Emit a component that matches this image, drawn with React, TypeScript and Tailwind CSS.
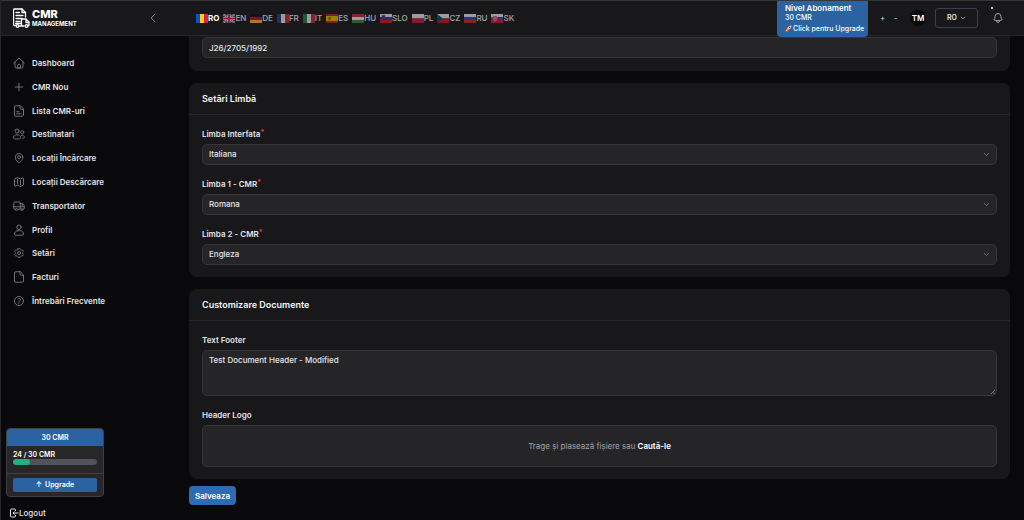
import React from "react";
import {
  HiOutlineBell,
  HiOutlineChevronDown,
  HiOutlineChevronLeft,
  HiOutlineCog6Tooth,
  HiOutlineMap,
  HiOutlineMapPin,
  HiOutlinePlus,
  HiOutlineQuestionMarkCircle,
} from "react-icons/hi2";

function iconFrom(children: React.ReactNode) {
  return function Icon({ className }: { className?: string }) {
    return (
      <svg viewBox="0 0 24 24" className={className} fill="none" stroke="currentColor" strokeLinecap="round" strokeLinejoin="round" aria-hidden="true">
        {children}
      </svg>
    );
  };
}

const HomeIcon = iconFrom(
  <>
    <path d="M1.5 12L12 2l10.5 10M4 10v9.5A2.5 2.5 0 0 0 6.5 22h11a2.5 2.5 0 0 0 2.5-2.5V10" />
    <path d="M9 17.5a3 3 0 0 1 6 0V22H9z" />
  </>
);

const FileIcon = iconFrom(
  <path d="M14 1.5H5.5A2.5 2.5 0 0 0 3 4v16a2.5 2.5 0 0 0 2.5 2.5h13A2.5 2.5 0 0 0 21 20V8.5zM14 1.5V6a2.5 2.5 0 0 0 2.5 2.5H21" />
);

const FileTextIcon = iconFrom(
  <>
    <path d="M14 1.5H5.5A2.5 2.5 0 0 0 3 4v16a2.5 2.5 0 0 0 2.5 2.5h13A2.5 2.5 0 0 0 21 20V8.5zM14 1.5V6a2.5 2.5 0 0 0 2.5 2.5H21" />
    <path d="M7.5 13.5h5M7.5 17.5h9" />
  </>
);

const UsersIcon = iconFrom(
  <>
    <circle cx="8" cy="6" r="4" />
    <path d="M1 19.5c0-3.5 3-6 7-6s7 2.5 7 6c0 2-3 2.500-7 2.500s-7-.5-7-2.500z" />
    <circle cx="18.5" cy="8.5" r="3" />
    <path d="M16.5 14.5c3.5-.5 6.500 1.5 6.500 4 0 1.500-1.500 2-4 2" />
  </>
);

const UserIcon = iconFrom(
  <>
    <circle cx="12" cy="6.5" r="4.5" />
    <path d="M8.5 13.5h7c3 1 5.5 3.5 5.5 6.5 0 1.5-1 2.5-2.5 2.5h-13C4 22.5 3 21.5 3 20c0-3 2.5-5.5 5.5-6.5z" />
  </>
);

const TruckIcon = iconFrom(
  <>
    <path d="M5 18.5H3.5a2 2 0 0 1-2-2v-10A2.5 2.5 0 0 1 4 4h8.5a2 2 0 0 1 2 2v12.5H9M14.5 7.5H18c3 0 4.5 2.5 4.5 5.5v3.5a2 2 0 0 1-2 2M1.5 13.5H22M18.5 8v5" />
    <circle cx="7" cy="19" r="2" />
    <circle cx="18" cy="19" r="2" />
  </>
);

const navItems = [
  { label: "Dashboard", icon: HomeIcon },
  { label: "CMR Nou", icon: HiOutlinePlus },
  { label: "Lista CMR-uri", icon: FileTextIcon },
  { label: "Destinatari", icon: UsersIcon },
  { label: "Locații Încărcare", icon: HiOutlineMapPin },
  { label: "Locații Descărcare", icon: HiOutlineMap },
  { label: "Transportator", icon: TruckIcon },
  { label: "Profil", icon: UserIcon },
  { label: "Setări", icon: HiOutlineCog6Tooth },
  { label: "Facturi", icon: FileIcon },
  { label: "Întrebări Frecvente", icon: HiOutlineQuestionMarkCircle },
];

const languages = ["RO", "EN", "DE", "FR", "IT", "ES", "HU", "SLO", "PL", "CZ", "RU", "SK"];

const horizontal: Record<string, string[]> = {
  DE: ["#111111", "#d0102a", "#f5c518"],
  HU: ["#cd2a3e", "#f4f4f4", "#3f8a3c"],
  SLO: ["#f4f4f4", "#1f3fc0", "#e01b24"],
  RU: ["#f4f4f4", "#1c57c4", "#d52b1e"],
  SK: ["#f4f4f4", "#1c57b4", "#e0162b"],
};

const vertical: Record<string, string[]> = {
  RO: ["#0b50c8", "#fcd116", "#dd2033"],
  FR: ["#25408f", "#f4f4f4", "#d8283c"],
  IT: ["#1f8a4a", "#f4f4f4", "#cd2a3e"],
};

function Flag({ code }: { code: string }) {
  return (
    <svg viewBox="0 0 12 9" className="h-[9px] w-3 shrink-0" aria-hidden="true">
      {horizontal[code]?.map((color, i) => (
        <rect key={color} y={i * 3} width="12" height="3" fill={color} />
      ))}
      {vertical[code]?.map((color, i) => (
        <rect key={color} x={i * 4} width="4" height="9" fill={color} />
      ))}
      {code === "EN" && (
        <>
          <rect width="12" height="9" fill="#20336f" />
          <path d="M0 0l12 9M12 0L0 9" stroke="#f4f4f4" strokeWidth="2" />
          <path d="M0 0l12 9M12 0L0 9" stroke="#c8102e" strokeWidth="0.7" />
          <path d="M6 0v9M0 4.5h12" stroke="#f4f4f4" strokeWidth="3" />
          <path d="M6 0v9M0 4.5h12" stroke="#c8102e" strokeWidth="1.6" />
        </>
      )}
      {code === "ES" && (
        <>
          <rect width="12" height="9" fill="#c8202c" />
          <rect y="2" width="12" height="5" fill="#f5c000" />
          <rect x="2.5" y="3" width="2.2" height="2.8" fill="#b04a2a" />
        </>
      )}
      {code === "PL" && (
        <>
          <rect width="12" height="4.5" fill="#f4f4f4" />
          <rect y="4.5" width="12" height="4.5" fill="#dc143c" />
        </>
      )}
      {code === "CZ" && (
        <>
          <rect width="12" height="4.5" fill="#f4f4f4" />
          <rect y="4.5" width="12" height="4.5" fill="#d7141a" />
          <path d="M0 0l6 4.5L0 9z" fill="#11457e" />
        </>
      )}
      {code === "SLO" && <path d="M2 1.2h3v2.4L3.5 5 2 3.6z" fill="#1f3fc0" stroke="#e01b24" strokeWidth="0.4" />}
      {code === "SK" && (
        <>
          <path d="M2 2h4v3L4 7.4 2 5z" fill="#e0162b" stroke="#f4f4f4" strokeWidth="0.6" />
          <path d="M4 2.8v3M3 4h2" stroke="#f4f4f4" strokeWidth="0.6" />
        </>
      )}
    </svg>
  );
}

function Logo() {
  return (
    <a href="#" className="flex items-center gap-[2px] text-white">
      {/* document with a truck in front */}
      <svg viewBox="0 0 34 40" className="h-5 w-[17px]" fill="none" stroke="currentColor" strokeWidth="2.6" strokeLinejoin="round" strokeLinecap="round">
        <path d="M6 35H3a2 2 0 0 1-2-2V4a2 2 0 0 1 2-2h15l7 7v9" />
        <path d="M18 2v7h7M6 9h7M6 15h14M6 21h12M6 27h8" />
        <path d="M12 36h10M17 29v-7h9l6 6v7h-2M26 22v7h6M5 31h12v4" />
        <circle cx="9" cy="36" r="2.6" />
        <circle cx="27" cy="36" r="2.6" />
      </svg>
      <span className="flex flex-col">
        <span className="text-[11px] leading-[11px] font-extrabold">CMR</span>
        <span className="text-[6px] leading-[7px] font-bold">MANAGEMENT</span>
      </span>
    </a>
  );
}

function Rocket() {
  return (
    <svg viewBox="0 0 14 14" className="size-[7px] shrink-0" aria-hidden="true">
      <path d="M1 7l4-3 2 3-3 2zM7 13l3-4-3-2-2 3z" fill="#e0283c" />
      <path d="M4 8c1-4 5-7 9-7 0 4-3 8-7 9z" fill="#e4c9b8" />
      <circle cx="9" cy="5" r="1.4" fill="#2b5f9e" />
      <path d="M1 13c0-3 1-5 3-5l2 2c0 2-2 3-5 3z" fill="#f5a623" />
    </svg>
  );
}

function Header() {
  return (
    <header className="relative z-10 flex h-9 shrink-0 items-center border-t border-b border-t-[#33373a] border-b-[#27272a] bg-[#18181b]">
      <div className="flex w-[188px] shrink-0 items-center justify-between pr-[30px] pl-3">
        <Logo />
        <button type="button" aria-label="Restrânge meniul" className="text-[#8a8a93]">
          <HiOutlineChevronLeft className="size-3 stroke-2" />
        </button>
      </div>

      <div className="flex items-center gap-1 pl-[7px]">
        {languages.map((code) => (
          <button
            key={code}
            type="button"
            className={code === "RO" ? "flex items-center text-[8px] leading-3 font-bold text-white" : "flex items-center text-[8px] leading-3 font-medium text-white opacity-60"}
          >
            <Flag code={code} />
            {code}
          </button>
        ))}
      </div>

      <div className="ml-auto flex items-center self-stretch pr-5">
        <a href="#" className="h-9 w-[91px] self-start rounded-b-[4px] bg-[#2a62a2] px-2 pt-[2px] text-white">
          <span className="block text-[8px] leading-[10px] font-semibold whitespace-nowrap">Nivel Abonament</span>
          <span className="block text-[7px] leading-[9px] font-medium">30 CMR</span>
          <span className="flex items-center gap-[1px] pt-[2px] text-[7px] leading-[9px] font-medium whitespace-nowrap">
            <Rocket />
            Click pentru Upgrade
          </span>
        </a>
        <div className="flex gap-2 pl-3 text-[8px] leading-3 text-[#d4d4d8]">
          <button type="button" className="w-[5px]">+</button>
          <button type="button" className="w-[5px]">-</button>
        </div>
        <div className="ml-3 flex size-4 items-center justify-center rounded-full bg-[#09090b] text-[8px] font-semibold text-white">
          TM
        </div>
        <button type="button" className="ml-[9px] flex h-5 w-[43px] items-center justify-center gap-[3px] rounded-[3px] border border-[#374151] text-[7px] font-semibold text-[#e4e4e7]">
          RO
          <HiOutlineChevronDown className="size-[6px] stroke-[2.5px]" />
        </button>
        <button type="button" aria-label="Notificări" className="relative ml-[14px] text-[#a1a1aa]">
          <HiOutlineBell className="size-3 stroke-2" />
          <span className="absolute -top-[5px] -left-[1px] size-[2px] rounded-full bg-white" />
        </button>
      </div>
    </header>
  );
}

function Sidebar() {
  return (
    <aside className="flex w-[188px] shrink-0 flex-col pt-[21px]">
      <nav className="flex h-[250px] flex-col justify-between pl-3">
        {navItems.map(({ label, icon: Icon }) => (
          <a key={label} href="#" className="flex h-3 items-center gap-[7px] text-[8px] leading-3 font-semibold text-[#e4e4e7]">
            <Icon className="size-3 stroke-2 text-[#71717a]" />
            {label}
          </a>
        ))}
      </nav>

      <div className="mt-auto ml-[5px] flex w-[98px] flex-col overflow-hidden rounded-[4px] border border-[#3f3f46] bg-[#27272a] text-[7px] font-semibold text-white">
        <div className="bg-[#2a62a2] text-center leading-[17px]">30 CMR</div>
        <div className="border-b border-[#3f3f46] px-[6px] pt-1 pb-2">
          <div className="leading-[9px]">24 / 30 CMR</div>
          <div className="h-[6px] overflow-hidden rounded-full bg-[#52525b]">
            <div className="h-full w-1/5 rounded-full bg-[#22b07d]" />
          </div>
        </div>
        <button type="button" className="mx-[6px] my-1 flex justify-center gap-[3px] rounded-[2px] bg-[#2a62a2] leading-[14px]">
          <span>↑</span>
          Upgrade
        </button>
      </div>

      <button type="button" className="mt-[10px] mb-[1px] ml-2 flex items-center text-[8px] leading-3 font-medium text-[#e4e4e7]">
        <svg viewBox="0 0 20 20" className="size-[10px]" fill="none" stroke="currentColor" strokeWidth="2" strokeLinejoin="round">
          <path d="M13 6V4a2 2 0 0 0-2-2H5a2 2 0 0 0-2 2v12a2 2 0 0 0 2 2h6a2 2 0 0 0 2-2v-2" />
          <path d="M19 10H8M11 7l-3 3 3 3" />
        </svg>
        Logout
      </button>
    </aside>
  );
}

function Card({ title, children }: { title: string; children: React.ReactNode }) {
  return (
    <section className="rounded-lg bg-[#18181b]">
      <h2 className="border-b border-[#27272a] px-[13px] text-[9px] leading-[31px] font-semibold text-[#f4f4f5]">{title}</h2>
      <div className="flex flex-col gap-[13px] px-[13px] pt-[13px] pb-3">{children}</div>
    </section>
  );
}

function SelectField({ id, label, value }: { id: string; label: string; value: string }) {
  return (
    <div className="flex flex-col gap-1">
      <label htmlFor={id} className="flex text-[8px] leading-3 font-semibold text-[#e4e4e7]">
        {label}
        <span className="text-[7px] leading-[9px] text-[#ef4444]">*</span>
      </label>
      <div className="relative flex">
        <select
          id={id}
          defaultValue={value}
          className="h-[21px] w-full appearance-none rounded-[5px] border border-[#36363a] bg-[#252528] px-[6px] pb-[1px] text-[8px] font-medium text-[#e4e4e7]"
        >
          <option>Romana</option>
          <option>Engleza</option>
          <option>Italiana</option>
        </select>
        <HiOutlineChevronDown className="pointer-events-none absolute top-[7px] right-[7px] size-[7px] stroke-[2.5px] text-[#8a8a93]" />
      </div>
    </div>
  );
}

export default function App() {
  return (
    <div className="flex min-h-screen flex-col border-l border-[#27272a] bg-[#09090b] font-['Inter','Liberation_Sans',sans-serif]">
      <Header />
      <div className="flex grow">
        <Sidebar />
        <main className="min-w-0 grow pr-[14px]">
          <form className="flex flex-col gap-3">
            <section className="rounded-b-lg bg-[#18181b] px-[13px] pt-[1px] pb-[13px]">
              <input
                aria-label="Nr. Registrul Comerțului"
                defaultValue="J26/2705/1992"
                className="block h-[21px] w-full rounded-[5px] border border-[#36363a] bg-[#252528] px-[6px] text-[8px] font-medium text-[#e4e4e7]"
              />
            </section>

            <Card title="Setări Limbă">
              <SelectField id="ui-language" label="Limba Interfata" value="Italiana" />
              <SelectField id="cmr-language-1" label="Limba 1 - CMR" value="Romana" />
              <SelectField id="cmr-language-2" label="Limba 2 - CMR" value="Engleza" />
            </Card>

            <Card title="Customizare Documente">
              <div className="flex flex-col gap-1">
                <label htmlFor="footer-text" className="text-[8px] leading-3 font-semibold text-[#e4e4e7]">
                  Text Footer
                </label>
                <div className="relative flex">
                  <textarea
                    id="footer-text"
                    defaultValue="Test Document Header - Modified"
                    className="h-[46px] w-full resize-none rounded-[5px] border border-[#36363a] bg-[#252528] px-[6px] py-[3px] text-[8px] leading-3 font-medium text-[#e4e4e7]"
                  />
                  {/* resize grip */}
                  <svg viewBox="0 0 4 4" className="pointer-events-none absolute right-[2px] bottom-[2px] size-1" stroke="#a1a1aa" strokeWidth="0.7">
                    <path d="M0 4L4 0M2.4 4L4 2.4" />
                  </svg>
                </div>
              </div>
              <div className="flex flex-col gap-1">
                <label htmlFor="header-logo" className="text-[8px] leading-3 font-semibold text-[#e4e4e7]">
                  Header Logo
                </label>
                <label
                  htmlFor="header-logo"
                  className="flex h-[42px] items-center justify-center gap-[2px] rounded-[5px] border border-[#36363a] bg-[#252528] text-[8px] text-[#a1a1aa]"
                >
                  Trage și plasează fișiere sau
                  <span className="font-semibold text-white">Caută-le</span>
                  <input id="header-logo" type="file" className="sr-only" />
                </label>
              </div>
            </Card>

            <button type="submit" className="-mt-[5px] h-[19px] w-[47px] rounded-[4px] bg-[#2d6cb0] text-[8px] font-semibold text-white">
              Salveaza
            </button>
          </form>
        </main>
      </div>
    </div>
  );
}
